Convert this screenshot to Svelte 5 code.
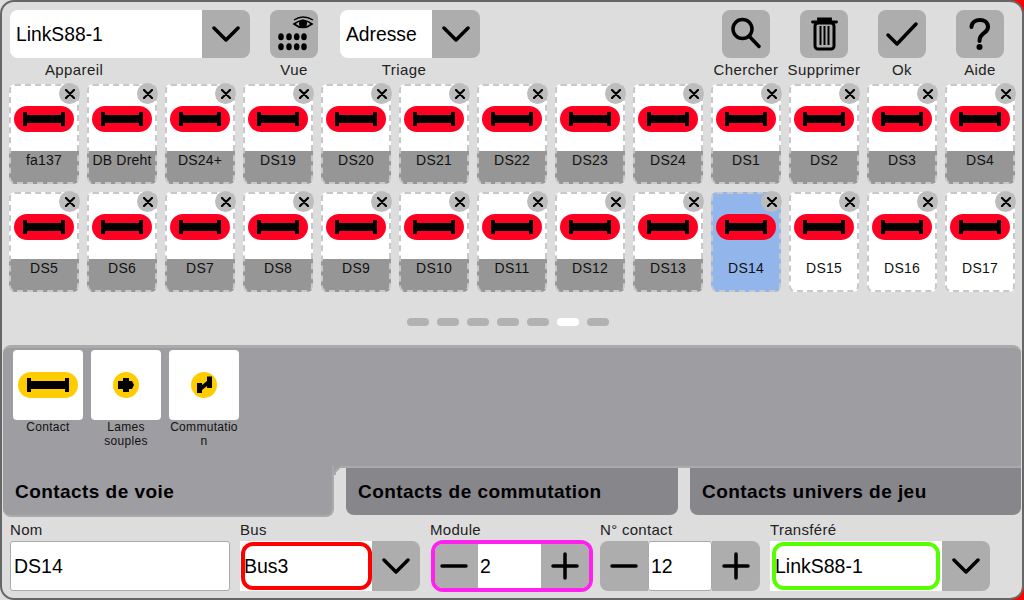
<script>
  const row1 = ["fa137", "DB Dreht", "DS24+", "DS19", "DS20", "DS21", "DS22", "DS23", "DS24", "DS1", "DS2", "DS3", "DS4"];
  const row2 = ["DS5", "DS6", "DS7", "DS8", "DS9", "DS10", "DS11", "DS12", "DS13", "DS14", "DS15", "DS16", "DS17"];
  const names = [...row1, ...row2];
  const selected = "DS14";
  const noBand = ["DS14", "DS15", "DS16", "DS17"];
  const dots = [0, 1, 2, 3, 4, 5, 6];
  const tabs = ["Contacts de voie", "Contacts de commutation", "Contacts univers de jeu"];
</script>

{#snippet chevron()}
  <svg width="28" height="18" viewBox="0 0 28 18"><path d="M2 3 L14 15 L26 3" fill="none" stroke="#000" stroke-width="3.5" stroke-linecap="round" stroke-linejoin="round" /></svg>
{/snippet}

{#snippet bar(color)}
  <svg width="60" height="26" viewBox="0 0 60 26">
    <rect width="60" height="26" rx="13" fill={color} />
    <path d="M9 6h4v3h34v-3h4v14h-4v-3h-34v3h-4z" fill="#000" />
  </svg>
{/snippet}

{#snippet minus()}
  <svg width="28" height="28" viewBox="0 0 28 28"><path d="M2 14H26" stroke="#000" stroke-width="3.5" stroke-linecap="round" /></svg>
{/snippet}

{#snippet plus()}
  <svg width="28" height="28" viewBox="0 0 28 28"><path d="M2 14H26M14 2V26" stroke="#000" stroke-width="3.5" stroke-linecap="round" /></svg>
{/snippet}

<div class="frame">
  <header>
    <div class="tool wide">
      <div class="combo">
        <div class="value">LinkS88-1</div>
        <button class="square">{@render chevron()}</button>
      </div>
      <span>Appareil</span>
    </div>
    <div class="tool vue">
      <button class="square">
        <svg width="48" height="48" viewBox="0 0 48 48">
          <path d="M24 14 Q33 7 42 14 Q33 21 24 14z" fill="none" stroke="#000" stroke-width="1.6" />
          <path d="M24 10 Q33 4 43 10" fill="none" stroke="#000" stroke-width="1.4" />
          <circle cx="33" cy="13.5" r="4" fill="#000" />
          {#each [26.7, 36.7] as y}
            {#each [11, 19, 26.7, 34] as x}
              <ellipse cx={x} cy={y} rx="2.8" ry="3.5" fill="#000" />
            {/each}
          {/each}
        </svg>
      </button>
      <span>Vue</span>
    </div>
    <div class="tool triage">
      <div class="combo">
        <div class="value">Adresse</div>
        <button class="square">{@render chevron()}</button>
      </div>
      <span>Triage</span>
    </div>
    <div class="spacer"></div>
    <div class="tool action">
      <button class="square">
        <svg width="48" height="48" viewBox="0 0 48 48"><circle cx="20.5" cy="19" r="9.5" fill="none" stroke="#000" stroke-width="3.5" /><path d="M28 27 L37 36.5" stroke="#000" stroke-width="3.5" stroke-linecap="round" /></svg>
      </button>
      <span>Chercher</span>
    </div>
    <div class="tool action">
      <button class="square">
        <svg width="48" height="48" viewBox="0 0 48 48">
          <path d="M12.5 12H36.5M18.5 11.5V9H30.5V11.5" fill="none" stroke="#000" stroke-width="2.8" stroke-linecap="round" />
          <rect x="15" y="13" width="19" height="26" rx="3" fill="none" stroke="#000" stroke-width="3" />
          <path d="M20.5 16V35M24.5 16V35M28.500 16V35" stroke="#000" stroke-width="2" />
        </svg>
      </button>
      <span>Supprimer</span>
    </div>
    <div class="tool action">
      <button class="square">
        <svg width="48" height="48" viewBox="0 0 48 48"><path d="M10 25 L19 34 L38 14" fill="none" stroke="#000" stroke-width="3.5" stroke-linecap="round" stroke-linejoin="round" /></svg>
      </button>
      <span>Ok</span>
    </div>
    <div class="tool action">
      <button class="square">
        <svg width="48" height="48" viewBox="0 0 48 48">
          <path d="M15.5 17 C16 7.5 32 7.5 32 17 C32 24 23.5 22 23.5 31" fill="none" stroke="#000" stroke-width="4" stroke-linecap="round" />
          <circle cx="23.5" cy="37" r="3" fill="#000" />
        </svg>
      </button>
      <span>Aide</span>
    </div>
  </header>

  <div class="grid">
    {#each names as name}
      <div class="card" class:selected={name === selected} class:band={!noBand.includes(name)}>
        <div class="close">
          <svg width="10" height="10" viewBox="0 0 10 10"><path d="M1 1L9 9M9 1L1 9" stroke="#000" stroke-width="2.2" stroke-linecap="round" /></svg>
        </div>
        <div class="pic">{@render bar("#ff0022")}</div>
        <div class="name">{name}</div>
      </div>
    {/each}
  </div>

  <div class="dots">
    {#each dots as d}
      <i class:on={d === 5}></i>
    {/each}
  </div>

  <section class="panel">
    <div class="palette">
      <div class="item">
        <div class="thumb">{@render bar("#ffcc00")}</div>
        <span>Contact</span>
      </div>
      <div class="item">
        <div class="thumb">
          <svg width="26" height="26" viewBox="0 0 26 26"><circle cx="13" cy="13" r="13" fill="#ffcc00" /><path d="M10 6h6v3h3l2 4l-2 4h-3v3h-6v-3h-5v-8h5z" fill="#000" /></svg>
        </div>
        <span>Lames souples</span>
      </div>
      <div class="item">
        <div class="thumb">
          <svg width="26" height="26" viewBox="0 0 26 26"><circle cx="13" cy="13" r="13" fill="#ffcc00" /><path d="M6 11h5v2l5-4v-4.5h5v11.5h-5v-2l-5 4v3h-5z" fill="#000" /></svg>
        </div>
        <span>Commutation</span>
      </div>
    </div>
    <div class="tabs">
      {#each tabs as tab, i}
        <div class="tab" class:active={i === 0}>{tab}</div>
      {/each}
    </div>
  </section>

  <footer>
    <div class="field nom">
      <label for="nom">Nom</label>
      <input id="nom" value="DS14" />
    </div>
    <div class="field bus">
      <span>Bus</span>
      <div class="combo">
        <div class="value holder"><div class="outlined red">Bus3</div></div>
        <button class="square">{@render chevron()}</button>
      </div>
    </div>
    <div class="field module">
      <span>Module</span>
      <div class="stepper pink">
        <button>{@render minus()}</button>
        <div class="num">2</div>
        <button>{@render plus()}</button>
      </div>
    </div>
    <div class="field contact">
      <span>N° contact</span>
      <div class="stepper">
        <button>{@render minus()}</button>
        <div class="num boxed">12</div>
        <button>{@render plus()}</button>
      </div>
    </div>
    <div class="field transfer">
      <span>Transféré</span>
      <div class="combo">
        <div class="value holder wider"><div class="outlined green">LinkS88-1</div></div>
        <button class="square">{@render chevron()}</button>
      </div>
    </div>
  </footer>
</div>

<style>
  :global(body) {
    background: linear-gradient(to right, #dddddd 50%, #ff0000 50%);
  }
  .frame {
    box-sizing: border-box;
    width: 1024px;
    height: 600px;
    background: #dddddd;
    border: 2px solid #666666;
    border-radius: 14px;
    padding: 8px 0 0 0;
    font-family: "Liberation Sans", Arial, sans-serif;
    color: #000;
    overflow: hidden;
  }
  button {
    border: 0;
    padding: 0;
    margin: 0;
    background: #adadad;
    display: flex;
    align-items: center;
    justify-content: center;
  }
  header {
    display: flex;
    height: 74px;
    padding-left: 8px;
    padding-right: 18px;
  }
  .tool {
    display: flex;
    flex-direction: column;
    align-items: center;
  }
  .tool span {
    margin-top: 4px;
    font-size: 15px;
    line-height: 16px;
    letter-spacing: 0.4px;
    white-space: nowrap;
    color: #222;
  }
  .wide {
    width: 240px;
  }
  .wide span,
  .triage span {
    width: 128px;
    text-align: center;
    align-self: flex-start;
  }
  .vue {
    margin-left: 20px;
    width: 48px;
  }
  .triage {
    margin-left: 22px;
    width: 140px;
  }
  .spacer {
    flex: 1;
  }
  .action {
    width: 48px;
    margin-left: 30px;
  }
  .square {
    width: 48px;
    height: 48px;
    border-radius: 8px;
    flex: none;
  }
  .combo {
    display: flex;
    height: 48px;
    width: 100%;
    border-radius: 8px;
    overflow: hidden;
  }
  .combo .square {
    border-radius: 0;
  }
  .value {
    flex: 1;
    min-width: 0;
    background: #fff;
    font-size: 19.3px;
    line-height: 50px;
    padding-left: 6px;
  }
  .grid {
    display: grid;
    grid-template-columns: repeat(13, 70px);
    grid-auto-rows: 100px;
    gap: 8px;
    padding-left: 7px;
  }
  .card {
    box-sizing: border-box;
    position: relative;
    display: flex;
    flex-direction: column;
    background: #fff;
    border: 2px dashed #c8c8c8;
    border-radius: 6px;
  }
  .card.band {
    background: linear-gradient(#fff 67px, #969696 67px) border-box;
  }
  .card.selected {
    background: #92b5ec;
  }
  .pic {
    height: 65px;
    flex: none;
    display: flex;
    justify-content: center;
    padding-top: 20px;
    box-sizing: border-box;
  }
  .name {
    flex: 1;
    text-align: center;
    font-size: 14px;
    line-height: 19px;
    letter-spacing: 0.2px;
    color: #111;
  }
  .close {
    position: absolute;
    top: -3px;
    right: -3px;
    width: 21px;
    height: 21px;
    border-radius: 50%;
    background: #bdbdbd;
    display: flex;
    align-items: center;
    justify-content: center;
  }
  .dots {
    display: flex;
    gap: 8px;
    justify-content: center;
    margin-top: 26px;
    padding-right: 8px;
    height: 8px;
  }
  .dots i {
    width: 22px;
    height: 8px;
    border-radius: 4px;
    background: #b2b2b2;
  }
  .dots i.on {
    background: #fff;
  }
  .panel {
    margin: 19px 1px 0 1px;
    height: 172px;
    background: #9e9da2;
    border-top: 3px solid #aaaaaa;
    border-radius: 8px;
    box-sizing: border-box;
    display: flex;
    flex-direction: column;
  }
  .palette {
    display: flex;
    gap: 8px;
    height: 118px;
    padding: 2px 0 0 10px;
    box-sizing: border-box;
  }
  .item {
    width: 70px;
    text-align: center;
    font-size: 12px;
    line-height: 14px;
    letter-spacing: 0.3px;
    color: #111;
    overflow-wrap: anywhere;
  }
  .item span {
    display: block;
  }
  .thumb {
    width: 70px;
    height: 70px;
    background: #fff;
    border-radius: 4px;
    display: flex;
    align-items: center;
    justify-content: center;
  }
  .tabs {
    box-sizing: border-box;
    display: grid;
    grid-template-columns: 331px 332px 331px;
    column-gap: 12px;
    height: 51px;
    background: #dddddd;
    border-top: 2px solid #aaaaaa;
  }
  .tab {
    font-size: 19px;
    font-weight: 700;
    line-height: 48px;
    padding-left: 12px;
    letter-spacing: 0.45px;
    height: 47px;
    background: #87868b;
    border-radius: 0 0 8px 8px;
  }
  .tab.active {
    position: relative;
    height: 51px;
    margin-top: -2px;
    background: #9e9da2;
    box-sizing: border-box;
    border-bottom: 2px solid #aaaaaa;
    border-right: 2px solid #aaaaaa;
    line-height: 52px;
  }
  .tab.active::after {
    content: "";
    position: absolute;
    left: calc(100% + 2px);
    top: 0;
    width: 9px;
    height: 9px;
    background: radial-gradient(circle at 100% 100%, #dddddd 7px, #aaaaaa 7px, #aaaaaa 9px, #9e9da2 9px);
  }
  footer {
    display: flex;
    padding: 4px 0 0 8px;
  }
  .field {
    display: flex;
    flex-direction: column;
  }
  .field > span,
  .field > label {
    font-size: 15px;
    line-height: 16px;
    letter-spacing: 0.3px;
    margin-top: 1px;
    margin-bottom: 3px;
    color: #222;
  }
  .nom {
    width: 220px;
  }
  input {
    box-sizing: border-box;
    width: 220px;
    height: 50px;
    border: 1px solid #aaaaaa;
    border-radius: 3px;
    background: #fff;
    padding: 0 0 0 3px;
    font: 19.5px "Liberation Sans", Arial, sans-serif;
    color: #000;
    outline: none;
  }
  .bus {
    width: 180px;
    margin-left: 10px;
  }
  .field .combo {
    height: 50px;
    border-radius: 0 8px 8px 0;
  }
  .field .combo .square {
    height: 50px;
  }
  .holder {
    padding: 1px 0 1px 1px;
    box-sizing: border-box;
    font-size: 19.5px;
  }
  .holder.wider {
    padding: 1px 2px 1px 2px;
  }
  .outlined {
    box-sizing: border-box;
    height: 48px;
    border: 4px solid;
    border-radius: 12px;
    line-height: 40px;
    text-indent: -1px;
  }
  .red {
    border-color: #ff0000;
  }
  .green {
    border-color: #55ff00;
  }
  .module {
    margin-left: 10px;
    width: 164px;
  }
  .contact {
    margin-left: 6px;
    width: 160px;
  }
  .transfer {
    margin-left: 10px;
    width: 220px;
  }
  .stepper {
    box-sizing: border-box;
    display: flex;
    height: 50px;
    border-radius: 8px;
    overflow: hidden;
  }
  .stepper button {
    width: 48px;
    flex: none;
  }
  .stepper .num {
    flex: 1;
    background: #fff;
    font-size: 19.5px;
    line-height: 48px;
    padding-left: 2px;
  }
  .stepper .boxed {
    border: 1px solid #aaaaaa;
    border-radius: 3px;
    box-sizing: border-box;
  }
  .pink {
    width: 162px;
    height: 52px;
    margin: -1px 0 0 1px;
    border: 4px solid #ff22ee;
    border-radius: 12px;
  }
  .pink button:first-child {
    width: 43px;
    padding-right: 5px;
    box-sizing: border-box;
  }
  .pink .num {
    line-height: 44px;
  }
</style>
